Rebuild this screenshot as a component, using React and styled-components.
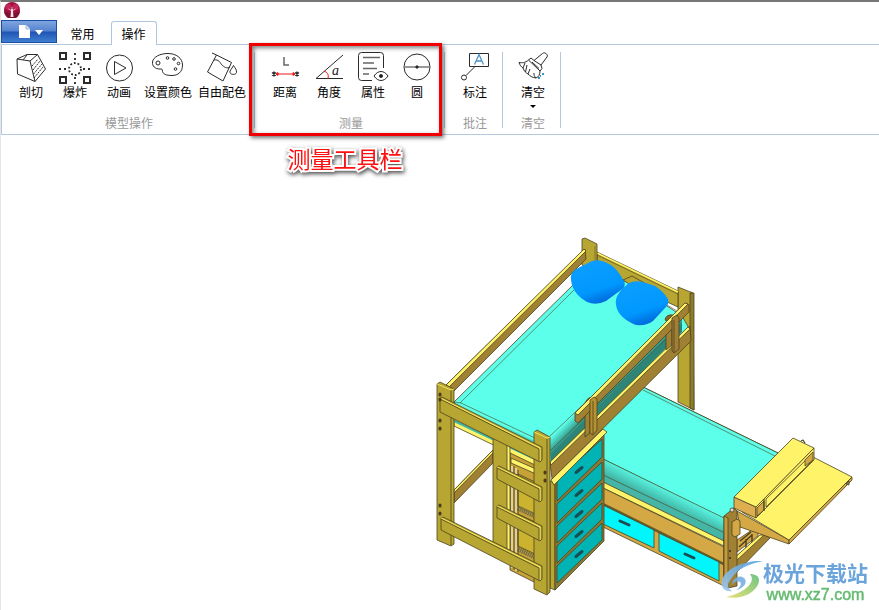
import React, { useState } from 'react';
import styled, { createGlobalStyle, css } from 'styled-components';

const GlobalStyle = createGlobalStyle`
    * {
        box-sizing: border-box;
    }

    body {
        margin: 0;
        background-color: #fff;
        font-family: "Noto Sans CJK SC", "Liberation Sans", sans-serif;
        font-size: 12px;
        color: #000;
    }
`;

/* ---------- icons ---------- */

const LogoIcon = () => (
    <svg width="16" height="16" viewBox="0 0 16 16" aria-hidden="true">
        <circle cx="8" cy="8" r="8" fill="#a3103f" />
        <path d="M0 9a8 8 0 0 0 16 0l-5 2-3 1-3-1z" fill="#7c1230" />
        <circle cx="4.500" cy="5" r="3" fill="#c2275a" />
        <circle cx="11.500" cy="5" r="3" fill="#c2275a" />
        <path d="M8 5v9M8 9 4.500 7M8 9l3.500-2" fill="none" stroke="#e9a9bd" strokeWidth="1" />
        <path d="M7.200 7h1.600l.7 8h-3z" fill="#f6e3e8" />
    </svg>
);

const FileIcon = () => (
    <svg width="24" height="14" viewBox="0 0 24 14" aria-hidden="true">
        <path d="M0 0h7l4 4v9H0z" fill="#fff" />
        <path d="M7 0v4h4" fill="#d4dff0" stroke="#8aa6d4" strokeWidth=".7" />
        <path d="M16 5h8l-4 5z" fill="#fff" />
    </svg>
);

const CutIcon = () => (
    <>
        <path d="M2 7 12 2.5 22.5 2.5 30.5 17 20 29.5 2.5 22zM2 7l13 2 7.500-6.500M15 9l5 20.500M12 3 8 8" />
        <path d="m17 14 6-7M18 18l7-9M18.500 22 27 12M19 26l9-11" strokeDasharray="2 1" />
    </>
);

const ExplodeIcon = () => (
    <>
        <path strokeWidth="2" d="M1 1h6v6H1zM25 1h6v6h-6zM1 25h6v6H1zM25 25h6v6h-6z" />
        <circle cx="16" cy="17" r="6" strokeWidth="1.800" strokeDasharray="1.800 1.970" />
        <path strokeWidth="1.800" strokeDasharray="2 3" d="M16 1v8M16 25v7M0 17h8M24 17h8" />
    </>
);

const PlayIcon = () => (
    <>
        <circle cx="16.500" cy="16" r="13" />
        <path d="M11.500 9.500v13L23 16z" />
    </>
);

const PaletteIcon = () => (
    <>
        <path d="M8 17C3 17 0 14 .5 10 1 5 8 1.500 16 1.500S30.500 6 30.500 13 26 23.500 20 23.500C14 23.500 11 22 10.500 19.500 10.500 17 10 17 8 17z" />
        <circle cx="6" cy="11" r="2" />
        <circle cx="15.500" cy="6" r="1.300" />
        <circle cx="22" cy="7" r="1.300" />
        <circle cx="26.500" cy="11.500" r="1.300" />
        <circle cx="23.500" cy="17" r="1.300" />
    </>
);

const BucketIcon = () => (
    <>
        <path d="M6 1l4.500 2 15 7.500L17 29 1.500 20 10.500 3M8 8c5-1 6 3 8 5s5 4 8 2" />
        <path d="M27.500 13.500c-2 4-4 5-3.500 7 .5 2.500 6 2.500 6.500 0S29 16 27.500 13.500z" />
    </>
);

const DistanceIcon = () => (
    <>
        <path stroke="#666" strokeWidth="1.500" d="M15 5v8h5" />
        <path stroke="#f01818" d="M7 22h19" />
        <path stroke="#f01818" fill="#f01818" d="m9 20.500-2 1.500 2 1.500zM24 20.500l2 1.500-2 1.500z" />
        <path strokeWidth="1.400" d="M5 19.500v5M3 20.500l4 3M3 23.500l4-3M28 19.500v5M26 20.500l4 3M26 23.500l4-3" />
    </>
);

const AngleIcon = () => (
    <>
        <path d="M30 3 3 26.500h27" />
        <path stroke="#f01818" d="M11 19.500c3 0 5 3 4 7" />
        <text x="19" y="23" fontFamily="Liberation Serif, serif" fontSize="14" fontStyle="italic" fill="#222" stroke="none">a</text>
    </>
);

const PropertyIcon = () => (
    <>
        <path d="M15 28.500H4.500a3 3 0 0 1-3-3V3.500a3 3 0 0 1 3-3h19a3 3 0 0 1 3 3V16" />
        <path stroke="#666" strokeWidth="1.500" d="M6 5.500h17M6 11h11M6 16.500h14M6 22h6" />
        <path fill="#fff" d="M17 24c4-6 10-6 14 0-4 6-10 6-14 0z" />
        <circle cx="24" cy="24" r="1.500" fill="#222" />
    </>
);

const CircleIcon = () => (
    <>
        <circle cx="16" cy="15" r="13" />
        <path stroke="#777" strokeWidth="1.500" d="M3 15h26" />
        <circle cx="16" cy="15" r="1.200" fill="#222" />
    </>
);

const NoteIcon = () => (
    <>
        <path d="M10.500 1.500h19v13h-19zM15.500 15 7 23.500" />
        <circle cx="5" cy="25.500" r="2.500" />
        <path stroke="#4a94c8" strokeWidth="1.300" d="m15.500 12.500 4.500-10 4.500 10M17 9h6" />
    </>
);

const BrushIcon = () => (
    <>
        <path d="M17 8.500 25.500 1.500c2-2 6 1 4.500 3.500L24 13M17 8.500 14 6l-2.500 2L23 19l2-2.500-1-3.500zM15 10l7 6.500" />
        <path d="M11.500 8C8 11 5 11 2 10.500c1 3 2 4 4 5.500M8 11l-2 5M6 16c1 3 3 5 5 6l2-5M11 22c2 2 4 3.500 8 4-2-2-2-3-2-5M19 26c3-1 4-4 4-7M10 13l-1.500 7" />
        <path stroke="#3596c8" strokeWidth="2" d="M21 26h2M25 22h2M23 24h1" />
    </>
);

/* ---------- ribbon ---------- */

const groups = [
    {
        caption: '模型操作',
        pad: '0 6px 0 7px',
        items: [
            { label: '剖切', Icon: CutIcon },
            { label: '爆炸', Icon: ExplodeIcon },
            { label: '动画', Icon: PlayIcon },
            { label: '设置颜色', Icon: PaletteIcon, wide: true },
            { label: '自由配色', Icon: BucketIcon, wide: true },
        ],
    },
    {
        caption: '测量',
        pad: '0 6px 0 8px',
        marked: true,
        items: [
            { label: '距离', Icon: DistanceIcon },
            { label: '角度', Icon: AngleIcon },
            { label: '属性', Icon: PropertyIcon },
            { label: '圆', Icon: CircleIcon },
        ],
    },
    { caption: '批注', pad: '0 6px 0 8px', items: [{ label: '标注', Icon: NoteIcon }] },
    { caption: '清空', pad: '0 6px 0 8px', items: [{ label: '清空', Icon: BrushIcon, menu: true }] },
];

function RibbonGroup({ caption, pad, marked, items }) {
    return (
        <Group $pad={pad} role="group" aria-label={caption}>
            <Items>
                {items.map(({ label, Icon, wide, menu }) => (
                    <Tool key={label} type="button" $wide={wide}>
                        <ToolIcon viewBox="0 0 32 32" aria-hidden="true"><Icon /></ToolIcon>
                        <span>{label}</span>
                        {menu && <Caret />}
                    </Tool>
                ))}
            </Items>
            <Caption>{caption}</Caption>
            {marked && <Marker />}
            {marked && <MarkerText>测量工具栏</MarkerText>}
        </Group>
    );
}

/* ---------- model ---------- */

const OLIVE = '#b8a632';
const BROWN = '#a08033';
const TAN = '#d4a845';
const YELLOW = '#fff36a';
const AQUA = '#5cffea';

const P = ({ d, fill = OLIVE }) => <polygon points={d} fill={fill} />;

const dresserDrawers = [
    [480, 439, 457, 501],
    [504, 462, 479, 523],
    [526, 483, 499, 543],
    [546, 503, 519, 563],
    [566, 523, 540, 583],
];

function LowerBed() {
    return (
        <g>
            <P d="601,420 643,387 778,453 734,500 723,542 601,484" fill="#44b5a6" />
            <P d="601,420 643,387 778,453 725,519 601,458" fill={AQUA} />
            <path className="bare" d="M601 458 724 518V532L601 474z" fill="url(#lowerFold)" />
            <path d="M601 458 724 518M643 390 775 456M601 474 723 532" fill="none" strokeWidth=".6" />
            <P d="601,481 724,541 724,546 601,487" fill={YELLOW} />
            <P d="601,487 724,547 724,565 601,504" fill={TAN} />
            <P d="601,504 724,565 724,586 601,526" fill={TAN} />
            <path d="M601 503 724 564" stroke="#6d5b25" strokeWidth="2.500" />
            <P d="603,505 654,530 654,548 603,524" fill="#00f6fa" />
            <P d="659,533 719,562 719,581 659,551" fill="#00f6fa" />
            <path d="M620 521l9 4M685 554l9 4" stroke="#174e53" strokeWidth="3" strokeLinecap="round" />
        </g>
    );
}

function Desk() {
    return (
        <g>
            <P d="737,540 758,526 758,536 737,552" fill={TAN} />
            <path d="M739 547l13-12M740 541l11-9M746 539v9M752 534v9" strokeWidth="1.500" />
            <P d="733,559 763,534 770,538 737,572 733,570" fill={BROWN} />
            <P d="733,559 760,535 764,535 736,561" fill={YELLOW} />
            <P d="724,516 734,508 737,511 737,586 728,588 724,585" fill={BROWN} />
            <P d="724,516 728,518 728,588 724,585" fill="#c39b3d" />
            <circle cx="732" cy="510" r="2" fill="#ddd" />
            <path d="M730 550v2M730 557v2" strokeWidth="2" />
            <P d="737,511 789,540 789,544 740,527" fill={TAN} />
            <P d="742,512 813,457 852,477 789,540" fill={YELLOW} />
            <P d="789,540 852,477 852,480 789,544" fill={TAN} />
            <path d="M846 484l3-3v4z" fill="#888" />
            <P d="732,522 737,519 740,521 740,534 735,537 732,535" fill={TAN} />
            <P d="734,497 756,507 756,518 734,508" fill="#dcae50" />
            <P d="756,507 814,448 814,460 756,518" fill={YELLOW} />
            <P d="757,508 764,501 764,510 757,516" fill={TAN} />
            <P d="766,499 812,454 812,461 766,507" fill={YELLOW} />
            <P d="805,460 813,452 813,460 805,466" fill={TAN} />
            <P d="793,438 814,448 756,507 734,497" fill={YELLOW} />
            <path d="M764 499v12M801 441l2-1 2 3" fill="none" strokeWidth="1.200" />
        </g>
    );
}

function UpperBed() {
    return (
        <g>
            <P d="678,287 693,293 694,410 678,402" />
            <P d="690,293 694,293 694,410 690,408" fill="#8c7c2c" />
            <P d="597,252 678,291 678,307 597,270" />
            <path d="M597 253 678 292" stroke={YELLOW} strokeWidth="1.500" />
            <path d="M597 255 678 294" strokeWidth=".6" />
            <P d="582,239 585,238 597,244 597,270 582,265" />
            <path d="M595 246v22" stroke="#776b24" />
            <P d="446,385 585,249 586,259 454,391" fill={BROWN} />
            <P d="446,385 584,249 586,251 449,387" fill={YELLOW} />

            <P d="454,402 574,284 600,270 640,288 682,316 690,330 552,465 540,459 455,407" fill={AQUA} />
            <path d="M460 403 575 289M454 402l7 1 76 36M662 302l20 12" fill="none" strokeWidth=".6" />
            <path className="bare" d="M454 403 535 441V452L454 410z" fill="url(#frontFold)" />
            <path className="bare" d="M549 437 682 309V332L551 463z" fill="url(#sideFold)" />
            <path d="M549 437 590 398M551 450 670 335" fill="none" strokeWidth=".6" />
            <P d="623,280 632,276 648,285 640,291" />
            <path className="bare" d="M571 280C570 273 574 270 580 267L591 261.500Q598 259 605 262L611 265C617 269 621 276 624.500 282Q626 287 621 290L606 301Q596 306 587 302C580 298 572 291 571 280z" fill="url(#pillow)" />
            <path className="bare" d="M616 305C615 298 618 294 622 289L629 283Q635 280 643 282L655 286Q663 291 668 299Q669.500 304 665 308L653 321Q647 326 636 325C628 322 617 315 616 305z" fill="url(#pillow)" />
        </g>
    );
}

function GuardRail() {
    return (
        <g>
            <path d="M585 403q4-9 11-4l-5 9zM665 320q1-6 8-5l-3 8z" fill="#80692b" />
            <P d="550,463 690,326 691,341 552,479" fill={BROWN} />
            <P d="550,462 688,327 690,329 551,465" fill={YELLOW} />
            <P d="666,323 672,317 672,345 666,350" fill={BROWN} />
            <P d="585,413 590,409 590,433 585,437" fill={BROWN} />
            <P d="575,413 686,303 689,305 689,312 578,423 575,421" fill={BROWN} />
            <P d="575,413 685,303 688,304 578,415" fill={YELLOW} />
            <P d="590,400 594,397 597,399 597,430 593,435 590,433" fill="#b8912f" />
            <P d="672,318 677,315 679,318 679,349 674,353 672,351" fill="#a37e35" />
            <path d="M593 401v33M674 320v32" />
        </g>
    );
}

function Dresser() {
    return (
        <g>
            <P d="510,452 536,464 536,583 510,570" fill="#c7a238" />
            <P d="511,458 536,469 536,474 511,463" fill={YELLOW} />
            <P d="518,474 535,482 535,514 518,506" fill="#cbb22f" />
            <P d="518,514 535,522 535,554 518,546" fill="#cbb22f" />
            <path d="M518 508l17 8M518 549l17 8" stroke="#777044" strokeWidth="5" strokeDasharray="1.500 .7" />
            <path d="M512 466V568M516 468V571" fill="none" stroke="#ded0a1" strokeWidth="2" />
            <path d="M514 466V570M518 470V572" />
            <P d="550,481 555,483 555,590 550,588" fill={OLIVE} />
            <P d="555,484 604,435 604,541 555,590" fill="#897936" />
            {dresserDrawers.map(([tl, tr, br, bl]) => (
                <g key={tl}>
                    <P d={`557,${tl} 602,${tr} 602,${br} 557,${bl}`} fill="#00b3b5" />
                    <path d={`M576 ${(tl + bl) / 2 - 18}l6-5`} stroke="#174e53" strokeWidth="3" strokeLinecap="round" />
                </g>
            ))}
            <P d="551,480 603,429 607,432 554,485" fill={YELLOW} />
        </g>
    );
}

function FrontFrame() {
    return (
        <g>
            <P d="454,490 493,450 493,463 454,503" fill={BROWN} />
            <P d="454,490 493,450 493,453 454,493" fill={YELLOW} />
            <P d="454,420 535,459 535,465 454,426" fill={YELLOW} />
            <path d="M454 421 535 459" stroke="#3fb8a4" strokeWidth="2" />
            <P d="493,437 508,445 508,552 493,545" />
            <P d="507,445 510,447 510,550 507,550" fill={YELLOW} />

            <P d="437,384 440,382 454,389 454,544 451,546 437,540" />
            <path d="M451 390V545" />
            <path d="M437 384l14 6 3-1" fill="none" stroke={YELLOW} />
            <P d="534,432 537,430 550,437 550,592 547,595 534,589" />
            <path d="M547 439V594" />
            <path d="M534 432l13 6 3-1" fill="none" stroke={YELLOW} />

            {[[440, 398, 412, 448], [497, 467, 479, 488], [497, 506, 518, 527], [441, 518, 530, 567]].map(([x, top, bottom, end]) => (
                <g key={`${x}-${top}`}>
                    <P d={`${x},${top} ${x + 2},${top - 1} 542,${end - 1} 542,${end + 12} 540,${end + 14} ${x},${bottom}`} />
                    <path d={`M${x} ${top}L540 ${end}V${end + 13}`} fill="none" stroke={YELLOW} strokeWidth="1" />
                    <path d={`M${x} ${top + 1}L539 ${end + 1}V${end + 13}`} fill="none" />
                </g>
            ))}
            <path
                className="bolts"
                d="M440 394v1M440 399v1M440 420v1M440 428v1M440 505v1M440 513v1M545 472v1M545 480v1"
            />
        </g>
    );
}

function Model() {
    return (
        <ModelSvg viewBox="430 230 449 380" aria-hidden="true">
            <defs>
                <linearGradient id="pillow" x1="0" y1="0" x2=".4" y2="1">
                    <stop offset="0" stopColor="#1594ff" />
                    <stop offset=".2" stopColor="#0a9dff" />
                    <stop offset=".75" stopColor="#0098ff" />
                    <stop offset="1" stopColor="#0070e0" />
                </linearGradient>
                <linearGradient id="lowerFold" gradientUnits="userSpaceOnUse" x1="664" y1="486" x2="656" y2="502">
                    <stop offset="0" stopColor={AQUA} />
                    <stop offset="1" stopColor="#3fae9f" />
                </linearGradient>
                <linearGradient id="frontFold" gradientUnits="userSpaceOnUse" x1="495" y1="420" x2="491" y2="431">
                    <stop offset="0" stopColor={AQUA} />
                    <stop offset="1" stopColor="#35b5a2" />
                </linearGradient>
                <linearGradient id="sideFold" gradientUnits="userSpaceOnUse" x1="610" y1="378" x2="619" y2="387">
                    <stop offset="0" stopColor={AQUA} />
                    <stop offset="1" stopColor="#2d8577" />
                </linearGradient>
            </defs>
            <LowerBed />
            <Desk />
            <UpperBed />
            <GuardRail />
            <Dresser />
            <FrontFrame />
        </ModelSvg>
    );
}

function Watermark() {
    return (
        <Mark>
            <svg width="42" height="42" viewBox="0 0 42 42" aria-hidden="true">
                <defs>
                    <linearGradient id="leaf" x1="0" y1="1" x2="1" y2="0">
                        <stop offset="0" stopColor="#e6df6a" />
                        <stop offset="1" stopColor="#5fbf78" />
                    </linearGradient>
                    <linearGradient id="wing" x1="0" y1="1" x2="1" y2="0">
                        <stop offset="0" stopColor="#a3c9ec" />
                        <stop offset="1" stopColor="#4f9fdc" />
                    </linearGradient>
                </defs>
                <path d="M42 1C24 0 5 8 1 20c-2 9 4 12 10 11-5-3-5-7-1-12C16 9 27 4 42 1z" fill="url(#wing)" />
                <path d="M11 25c0-7 8-11 12-7 5 5-2 11-8 12 4-2 6-6 4-8-3-2-6 0-8 3z" fill="#78b0e2" />
                <path d="M29 14c11 0 12 9 3 17-7 6-17 8-27 6 10-2 20-7 24-13 3-4 2-7 0-10z" fill="url(#leaf)" />
            </svg>
            <MarkText>
                <strong>极光下载站</strong>
                <span>www.xz7.com</span>
            </MarkText>
        </Mark>
    );
}

const tabs = ['常用', '操作'];

function App() {
    const [active, setActive] = useState('操作');

    return (
        <Window>
            <GlobalStyle />
            <TitleBar><LogoIcon /></TitleBar>
            <TabRow>
                <AppButton type="button" aria-label="文件"><FileIcon /></AppButton>
                <Tabs role="tablist">
                    {tabs.map((tab) => (
                        <Tab key={tab} type="button" role="tab" aria-selected={tab === active} $active={tab === active} onClick={() => setActive(tab)}>
                            {tab}
                        </Tab>
                    ))}
                </Tabs>
            </TabRow>
            <Ribbon>
                {groups.map((group) => <RibbonGroup key={group.caption} {...group} />)}
            </Ribbon>
            <Viewport>
                <Model />
                <Watermark />
            </Viewport>
        </Window>
    );
}

export default App;

const Window = styled.div`
    min-height: 100vh;
    display: flex;
    flex-direction: column;
    border-top: 2px solid #777;
    border-left: 1px solid #e6e6e6;
`;

const TitleBar = styled.header`
    height: 18px;
    padding-left: 3px;

    svg {
        display: block;
    }
`;

const TabRow = styled.div`
    display: flex;
    align-items: flex-start;
    height: 24px;
`;

const AppButton = styled.button`
    width: 56px;
    height: 23px;
    padding: 0 0 0 4px;
    display: flex;
    align-items: center;
    justify-content: center;
    border: 1px solid #1c4fa3;
    background: linear-gradient(#7fa5e0 0, #5583cf 48%, #1f54b4 52%, #3f7fd0 100%);
    cursor: pointer;
`;

const Tabs = styled.div`
    display: flex;
    gap: 5px;
    padding: 1px 0 0 3px;
`;

const Tab = styled.button`
    width: 46px;
    height: 24px;
    padding: 0 1px 0 0;
    border: 1px solid transparent;
    border-bottom: none;
    border-radius: 3px 3px 0 0;
    background: transparent;
    font: inherit;
    color: #000;
    cursor: pointer;
    position: relative;
    z-index: 1;

    ${({ $active }) => $active && css`
        background: #fff;
        border-color: #b0c6e0;
    `}
`;

const Ribbon = styled.section`
    display: flex;
    border: solid #b4c8de;
    border-width: 1px 0 1px 1px;
`;

const Group = styled.div`
    position: relative;
    padding: ${({ $pad }) => $pad};
    padding-top: 7px;
    padding-bottom: 3px;
    background: linear-gradient(#b4c8de, #b4c8de) right 7px / 1px 76px no-repeat;
`;

const Items = styled.div`
    display: flex;
    min-height: 63px;
`;

const Tool = styled.button`
    width: ${({ $wide }) => ($wide ? '54px' : '44px')};
    padding: 0;
    border: none;
    background: transparent;
    font: inherit;
    line-height: 16px;
    color: #000;
    white-space: nowrap;
    display: flex;
    flex-direction: column;
    align-items: center;
    cursor: pointer;
`;

const ToolIcon = styled.svg`
    width: 32px;
    height: 32px;
    fill: none;
    stroke: #2b2b2b;
    stroke-width: 1px;
`;

const Caret = styled.i`
    margin-top: 5px;
    border: 3px solid transparent;
    border-top-color: #000;
    border-bottom: none;
`;

const Caption = styled.div`
    line-height: 16px;
    text-align: center;
    color: #999;
`;

const Marker = styled.div`
    position: absolute;
    inset: -2px 3px -2px -6px;
    border: 3px solid #f00000;
    box-shadow: 2px 2px 4px rgba(0, 0, 0, .55), inset 2px 2px 4px rgba(0, 0, 0, .5);
    pointer-events: none;
`;

const MarkerText = styled.div`
    position: absolute;
    top: 100%;
    left: 0;
    right: 10px;
    padding-top: 8px;
    text-align: center;
    font-size: 23px;
    line-height: 32px;
    white-space: nowrap;
    color: #ff1010;
    -webkit-text-stroke: 4px #fff;
    paint-order: stroke fill;
    filter: drop-shadow(1px 2px 2px rgba(0, 0, 0, .7));
`;

const Viewport = styled.main`
    position: relative;
    flex: 1;
    display: flex;
    justify-content: flex-end;
    align-items: flex-end;
`;

const ModelSvg = styled.svg`
    width: 449px;
    height: 380px;
    stroke: #4b4320;
    stroke-width: .8px;
    stroke-linejoin: round;

    .bare {
        stroke: none;
    }

    .bolts {
        stroke: #4b3a1c;
        stroke-width: 3px;
        stroke-linecap: round;
    }
`;

const Mark = styled.div`
    position: absolute;
    right: 11px;
    bottom: 6px;
    display: flex;
    align-items: center;
    opacity: .9;
`;

const MarkText = styled.div`
    display: flex;
    flex-direction: column;
    align-items: center;
    white-space: nowrap;

    strong {
        font-size: 21px;
        line-height: 28px;
        font-weight: 700;
        color: #5b9bd8;
    }

    span {
        font-family: "Liberation Sans", Arial, sans-serif;
        font-size: 16px;
        line-height: 18px;
        color: #55b461;
        -webkit-text-stroke: .5px #55b461;
    }
`;
